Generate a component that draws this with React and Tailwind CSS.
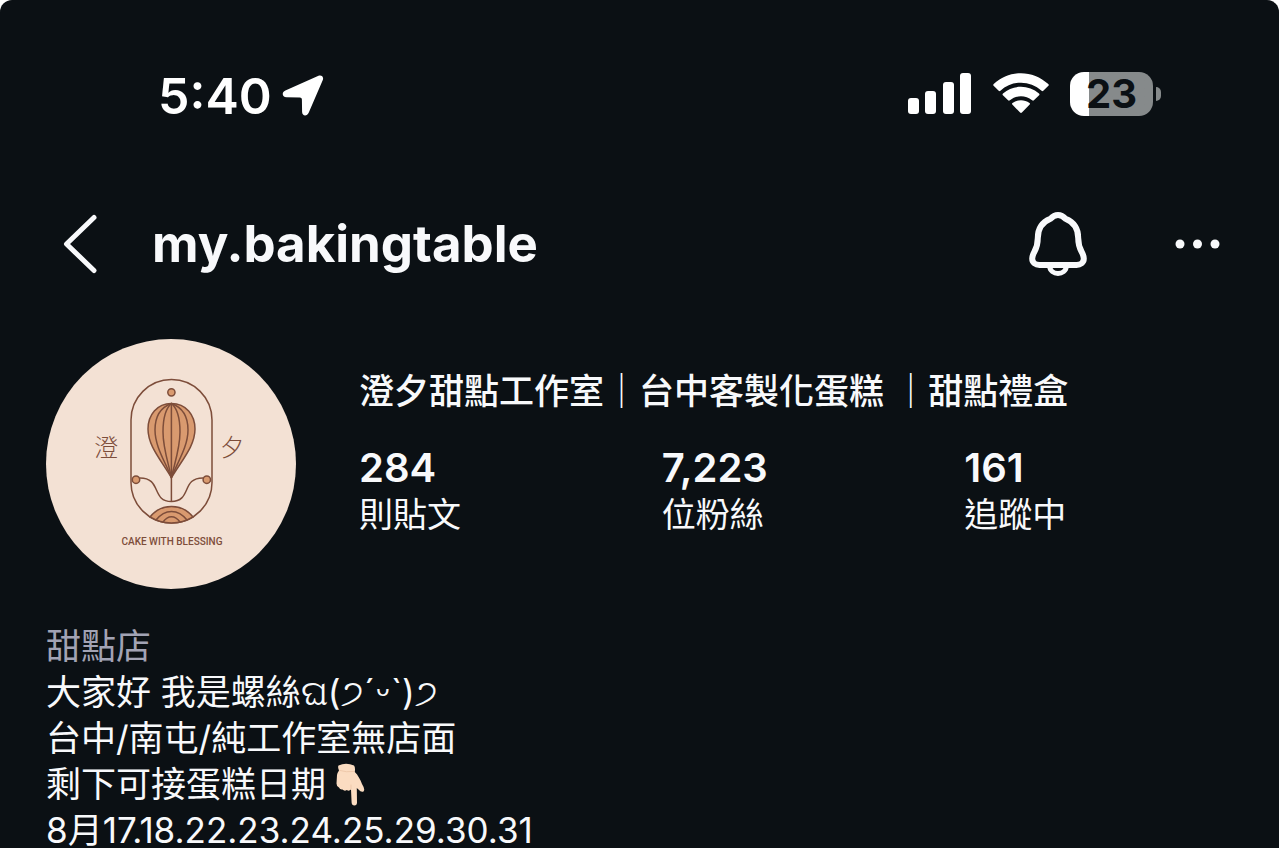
const stats = [
    { value: "284", label: "則貼文" },
    { value: "7,223", label: "位粉絲" },
    { value: "161", label: "追蹤中" },
];

function StatusBar() {
    return (
        <div className="flex items-center justify-between pl-[158px] pr-[118px] text-white">
            <div className="flex items-center gap-[10px] pt-1">
                <time className="text-[50px] leading-[56px] font-semibold">5:40</time>
                <svg width="42" height="42" viewBox="0 0 42 42" fill="currentColor" aria-hidden="true">
                    <path d="M36.500 .8C39.500 -.4 42 2 40.800 5L26.800 37.500C25 41.800 20.200 41.200 20.100 37L19.900 24.600Q19.900 22.600 17.900 22.600L4.500 22.300C0 22.100 -.6 17.200 3.400 15.400Z" />
                </svg>
            </div>
            <div className="flex items-center gap-[21px]">
                <svg width="64" height="42" viewBox="0 0 64 42" fill="currentColor" role="img" aria-label="Signal">
                    <rect x="0" y="25" width="11" height="16" rx="3" />
                    <rect x="17" y="18" width="11" height="23" rx="3" />
                    <rect x="35" y="9" width="11" height="32" rx="3" />
                    <rect x="52" y="0" width="11" height="41" rx="3" />
                </svg>
                <svg width="56" height="42" viewBox="0 0 56 42" fill="currentColor" role="img" aria-label="Wi-Fi">
                    <path d="M.6 12.800Q-.2 12 .7 11.100C16 -3.500 40 -3.500 55.300 11.100Q56.200 12 55.400 12.800L50.300 17.800Q49.500 18.600 48.600 17.700C37 7 19 7 7.400 17.700Q6.500 18.600 5.700 17.800Z" />
                    <path d="M9.900 22.200Q9.100 21.300 10 20.500C20.300 11.600 35.700 11.600 46 20.500Q46.900 21.300 46.100 22.200L40.900 27.300Q40.100 28.100 39.100 27.300C32.600 21.900 23.400 21.900 16.900 27.300Q15.900 28.100 15.100 27.300Z" />
                    <path d="M19.300 31.500Q18.500 30.700 19.500 29.900C24.500 26.200 31.500 26.200 36.500 29.900Q37.500 30.700 36.700 31.500L28.900 39.600Q28 40.500 27.100 39.600Z" />
                </svg>
                <div className="flex items-center gap-[3px]">
                    <div className="flex h-11 w-[83px] items-center justify-center rounded-[14px] bg-linear-to-r from-white from-[23%] to-[#868a8b] to-[23%] text-[40px] font-bold text-[#0b1014]">
                        23
                    </div>
                    <div className="h-[14px] w-[5px] rounded-r-full bg-[#868a8b]"></div>
                </div>
            </div>
        </div>
    );
}

function Header() {
    return (
        <header className="flex items-center pl-[62px] pr-[58px]">
            <button type="button" aria-label="Back">
                <svg width="36" height="60" viewBox="0 0 36 60" fill="none" stroke="currentColor" strokeWidth="5" strokeLinecap="round" strokeLinejoin="round">
                    <path d="M32 3.500L4.500 30L32 56.500" />
                </svg>
            </button>
            <h1 className="ml-[54px] flex-1 text-[51px] leading-[64px] font-bold">my.bakingtable</h1>
            <button type="button" aria-label="Notifications" className="mr-[88px]">
                <svg width="58" height="66" viewBox="0 0 58 66" fill="none" stroke="currentColor" strokeWidth="6" strokeLinejoin="round">
                    <path d="M29 4C25.500 4 23.500 5.500 21.500 7.800C13.500 11 8.800 18 8.800 27C8.800 40 3.200 41 3.200 47.500C3.200 51.500 6.500 54 10.500 54H47.500C51.500 54 54.800 51.500 54.800 47.500C54.800 41 49.200 40 49.200 27C49.200 18 44.500 11 36.500 7.800C34.500 5.500 32.500 4 29 4Z" />
                    <path d="M20.500 55C21.500 65 36.500 65 37.500 55" strokeWidth="5" />
                </svg>
            </button>
            <button type="button" aria-label="More options">
                <svg width="46" height="12" viewBox="0 0 46 12" fill="currentColor">
                    <circle cx="5" cy="6" r="4.500" />
                    <circle cx="22.500" cy="6" r="4.500" />
                    <circle cx="40" cy="6" r="4.500" />
                </svg>
            </button>
        </header>
    );
}

function Avatar() {
    return (
        <div className="size-[250px] shrink-0 overflow-hidden rounded-full bg-[#f3e1d4]">
            <svg viewBox="0 0 250 250" fill="none" stroke="#7d4d3a" strokeWidth="1.500" role="img" aria-label="澄夕 Cake with Blessing">
                <rect x="85" y="40.500" width="81" height="143.500" rx="40.500" />
                <g fill="#d99a6f">
                    <circle cx="125.400" cy="53.300" r="3.600" />
                    <path d="M125.400 64.500C111 64.500 102 76 102 90C102 107 115 121 125.400 138.700C136 121 149 107 149 90C149 76 140 64.500 125.400 64.500Z" />
                    <path d="M104 178C115 164 136 164 147 178Q137 184 125.400 184Q114 184 104 178Z" />
                    <circle cx="90" cy="140.700" r="3.700" />
                    <circle cx="160.800" cy="140.700" r="3.700" />
                </g>
                <path d="M125.400 64.500V162.500" />
                <path d="M125.400 64.500C113 69 109 79 109 91C109 108 120 124 125.400 138.700C131 124 142 108 142 91C142 79 138 69 125.400 64.500Z" />
                <path d="M125.400 64.500C119 70 117 80 117 93C117 110 123 126 125.400 138.700C128 126 134 110 134 93C134 80 132 70 125.400 64.500Z" />
                <path d="M93.500 138.900C116 138.500 105 162.500 125.400 162.500C146 162.500 135 138.500 157.300 138.900" />
                <path d="M110 181C119 169.500 132 169.500 141 181M117 183C122 176 129 176 134 183" />
                <g fill="#7d4d3a" stroke="none">
                    <text x="60" y="117" textAnchor="middle" className="text-[24px] font-light">澄</text>
                    <text x="186" y="117" textAnchor="middle" className="text-[24px] font-light">夕</text>
                    <text x="126" y="206" textAnchor="middle" className="font-['Roboto'] text-[10px] font-medium">CAKE WITH BLESSING</text>
                </g>
            </svg>
        </div>
    );
}

function PointingHand() {
    return (
        <svg width="30" height="43" viewBox="0 0 30 43" role="img" aria-label="👇🏻">
            <path d="M2.500 2.500Q10 -1 18 2.500Q19.500 4 18.800 9C22 12 24.500 17 26 21Q29.500 26.500 27.500 28.500Q25 29.500 22.500 26.500L20.800 25L21 39.500Q21 42.500 18.400 42.500Q15.800 42.500 15.600 39.500L15 26.500Q13 28.500 10.800 27Q8.500 28.500 6.500 26.500Q4 27 3 24.500Q.5 23.500 .5 20.500L1 12Q1.500 9.500 3 7.500Q1.500 4 2.500 2.500Z" fill="#fbdcc1" />
            <path d="M4 7.500Q10 9.500 17.500 8.500M15 26V22" fill="none" stroke="#efc9ab" strokeWidth="1" strokeLinecap="round" />
        </svg>
    );
}

function Profile() {
    return (
        <section className="flex gap-[63px] pl-[46px] pr-3">
            <Avatar />
            <div className="flex-1 pt-[26px]">
                <h2 className="text-[35px] leading-[52px] font-medium whitespace-pre">澄夕甜點工作室｜台中客製化蛋糕 ｜甜點禮盒</h2>
                <dl className="mt-[27px] grid grid-cols-3">
                    {stats.map((stat) => (
                        <div key={stat.label} className="flex flex-col-reverse">
                            <dt className="text-[34px] leading-[46px]">{stat.label}</dt>
                            <dd className="text-[40px] leading-[48px] font-semibold">{stat.value}</dd>
                        </div>
                    ))}
                </dl>
            </div>
        </section>
    );
}

function Bio() {
    return (
        <section className="px-[46px] pt-[34px] text-[35px] leading-[46px] whitespace-nowrap">
            <p className="text-[#a2a3b4]">甜點店</p>
            <p>大家好 我是螺絲ଘ(੭ˊᵕˋ)੭</p>
            <p>台中/南屯/純工作室無店面</p>
            <p className="flex items-center gap-[10px]">
                剩下可接蛋糕日期
                <PointingHand />
            </p>
            <p>8月17.18.22.23.24.25.29.30.31</p>
        </section>
    );
}

function App() {
    return (
        <div className="h-screen bg-white">
            <main className="h-full overflow-hidden rounded-t-xl bg-[#0b1014] pt-16 font-['Inter','Noto_Sans_CJK_TC',sans-serif] text-[#f8f9fb]" lang="zh-Hant">
                <StatusBar />
                <div className="pt-[87px] pb-[62px]">
                    <Header />
                </div>
                <Profile />
                <Bio />
            </main>
        </div>
    );
}

export default App;
